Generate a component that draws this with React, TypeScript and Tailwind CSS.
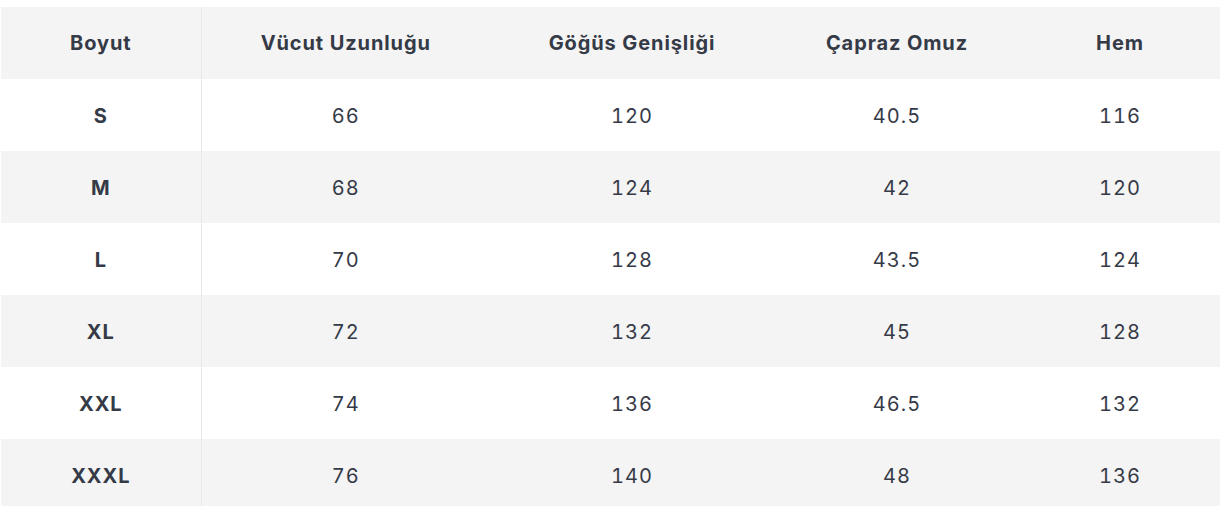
import React from "react";

const headers = ["Boyut", "Vücut Uzunluğu", "Göğüs Genişliği", "Çapraz Omuz", "Hem"];
const rows = [
  ["S", "66", "120", "40.5", "116"],
  ["M", "68", "124", "42", "120"],
  ["L", "70", "128", "43.5", "124"],
  ["XL", "72", "132", "45", "128"],
  ["XXL", "74", "136", "46.5", "132"],
  ["XXXL", "76", "140", "48", "136"],
];
const widths = ["w-[200px]", "w-[289px]", "w-[284px]", "w-[246px]", "w-[200px]"];

export default function App() {
  return (
    <div className="bg-white pt-[7px] pl-px w-[1226px]" style={{ fontFamily: "Inter, 'Noto Sans', sans-serif" }}>
      <table className="border-collapse w-[1219px] table-fixed text-[#353a47]">
        <colgroup>
          {widths.map((w, i) => (
            <col key={i} className={w} />
          ))}
        </colgroup>
        <thead>
          <tr className="bg-[#f4f4f4] h-[72px]">
            {headers.map((h, i) => (
              <th
                key={h}
                className={`text-[20px] font-bold tracking-[0.9px] text-center p-0 ${i === 0 ? "border-r border-[#e8e8e8]" : ""}`}
              >
                {h}
              </th>
            ))}
          </tr>
        </thead>
        <tbody>
          {rows.map((r, ri) => (
            <tr key={r[0]} className={`h-[72px] ${ri % 2 === 1 ? "bg-[#f4f4f4]" : "bg-white"}`}>
              {r.map((c, i) => (
                <td
                  key={i}
                  className={`text-[20px] text-center p-0 pt-[2px] ${i === 0 ? "font-bold tracking-[0.9px] border-r border-[#e8e8e8]" : "font-normal tabular-nums tracking-[1px]"}`}
                >
                  {c}
                </td>
              ))}
            </tr>
          ))}
        </tbody>
      </table>
    </div>
  );
}
